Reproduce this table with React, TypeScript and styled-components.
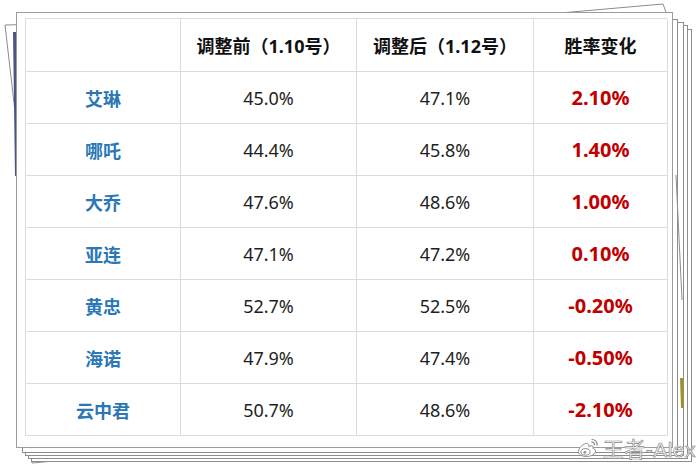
import React from 'react';
import styled, { createGlobalStyle } from 'styled-components';

const GlobalStyle = createGlobalStyle`
  html, body {
    margin: 0;
    padding: 0;
    background: #fff;
  }
`;

const Page = styled.div`
  position: relative;
  width: 700px;
  height: 468px;
  overflow: hidden;
  background: #fff;
  padding: 12px 0 0 16px;
  box-sizing: border-box;
  font-family: 'Noto Sans', 'Noto Sans CJK SC', sans-serif;
`;

const Stack = styled.svg`
  position: absolute;
  left: 0;
  top: 0;
  width: 700px;
  height: 468px;
`;

const Sheet = styled.div`
  position: relative;
  z-index: 1;
  width: 657px;
  height: 436px;
  box-sizing: border-box;
  background: #fff;
  border: 1px solid #9c9c9c;
`;

const Table = styled.div`
  display: grid;
  grid-template-columns: 155px 176px 177px 134px;
  grid-template-rows: 53px repeat(7, 52px);
  margin: 5px 0 0 8px;
  border-top: 1px solid #dcdcdc;
  border-left: 1px solid #dcdcdc;
  width: 642px;
  box-sizing: border-box;
`;

const Cell = styled.div<{ $kind?: 'head' | 'name' | 'num' | 'delta' }>`
  display: flex;
  align-items: center;
  justify-content: center;
  box-sizing: border-box;
  border-right: 1px solid #dcdcdc;
  border-bottom: 1px solid #dcdcdc;
  font-size: ${(p) => (p.$kind === 'delta' ? '20px' : '18px')};
  font-weight: ${(p) => (p.$kind === 'num' ? 400 : 700)};
  color: ${(p) =>
    p.$kind === 'name' ? '#2a78b5' : p.$kind === 'delta' ? '#c00000' : p.$kind === 'head' ? '#111' : '#1e1e1e'};
  white-space: nowrap;
`;

const Watermark = styled.div`
  position: absolute;
  z-index: 2;
  right: 4px;
  bottom: 5px;
  display: flex;
  align-items: center;
  gap: 4px;
  font-family: 'Liberation Sans', 'Noto Sans CJK SC', sans-serif;
  font-size: 21px;
  color: #fff;
  -webkit-text-stroke: 0.7px #8a8a8a;
  letter-spacing: 0.5px;
`;

const rows = [
  ['艾琳', '45.0%', '47.1%', '2.10%'],
  ['哪吒', '44.4%', '45.8%', '1.40%'],
  ['大乔', '47.6%', '48.6%', '1.00%'],
  ['亚连', '47.1%', '47.2%', '0.10%'],
  ['黄忠', '52.7%', '52.5%', '-0.20%'],
  ['海诺', '47.9%', '47.4%', '-0.50%'],
  ['云中君', '50.7%', '48.6%', '-2.10%'],
];

const WeiboLogo = () => (
  <svg width="22" height="20" viewBox="0 0 22 20" fill="none">
    <path
      d="M8.5 5.5c-3 1-7 4.5-7 8 0 3 3.5 5 8 5 5 0 9-2.6 9-5.4 0-1.8-1.6-2.4-2.6-2.7 .6-1.6.2-2.8-1.8-2.6-1 .1-2 .6-2.4.8.4-1.4 0-3.6-3.2-3.1z"
      fill="#fff"
      stroke="#8a8a8a"
      strokeWidth="1"
    />
    <ellipse cx="8.5" cy="13.8" rx="4.6" ry="3.2" fill="#fff" stroke="#8a8a8a" strokeWidth="1" />
    <circle cx="7.8" cy="14.2" r="1.3" fill="#8a8a8a" />
    <path d="M15 1.5c3 0 5.5 2.4 5 5.6" stroke="#8a8a8a" strokeWidth="1.2" strokeLinecap="round" />
    <path d="M15 4.2c1.5 0 2.6 1.1 2.4 2.6" stroke="#8a8a8a" strokeWidth="1.2" strokeLinecap="round" />
  </svg>
);

export default function App() {
  return (
    <Page>
      <GlobalStyle />
      <Stack viewBox="0 0 700 468">
        <g fill="none" stroke="#8c8c8c" strokeWidth="1">
          <path d="M5 25 L560 13 L663 4 L669 20 L676 175 L688 430 L120 455 L32 463 L16 120 Z" fill="#fff" />
          <rect x="31.5" y="29.5" width="660" height="432" fill="#fff" />
          <rect x="28.5" y="25.5" width="659" height="433" fill="#fff" />
          <rect x="25.5" y="22.5" width="658" height="433" fill="#fff" />
          <rect x="22.5" y="19.5" width="655" height="433" fill="#fff" />
          <path d="M676 175 L682 300" />
        </g>
        <polygon points="13,32 16,32 16,176 15,176" fill="#4a5580" />
        <polygon points="680,378 683.5,378 683.5,408 681,408" fill="#a0902a" />
      </Stack>
      <Sheet>
        <Table>
          <Cell $kind="head" />
          <Cell $kind="head">调整前（1.10号）</Cell>
          <Cell $kind="head">调整后（1.12号）</Cell>
          <Cell $kind="head">胜率变化</Cell>
          {rows.map((r) => (
            <React.Fragment key={r[0]}>
              <Cell $kind="name">{r[0]}</Cell>
              <Cell $kind="num">{r[1]}</Cell>
              <Cell $kind="num">{r[2]}</Cell>
              <Cell $kind="delta">{r[3]}</Cell>
            </React.Fragment>
          ))}
        </Table>
      </Sheet>
      <Watermark>
        <WeiboLogo />
        <span>王者-Alex</span>
      </Watermark>
    </Page>
  );
}
